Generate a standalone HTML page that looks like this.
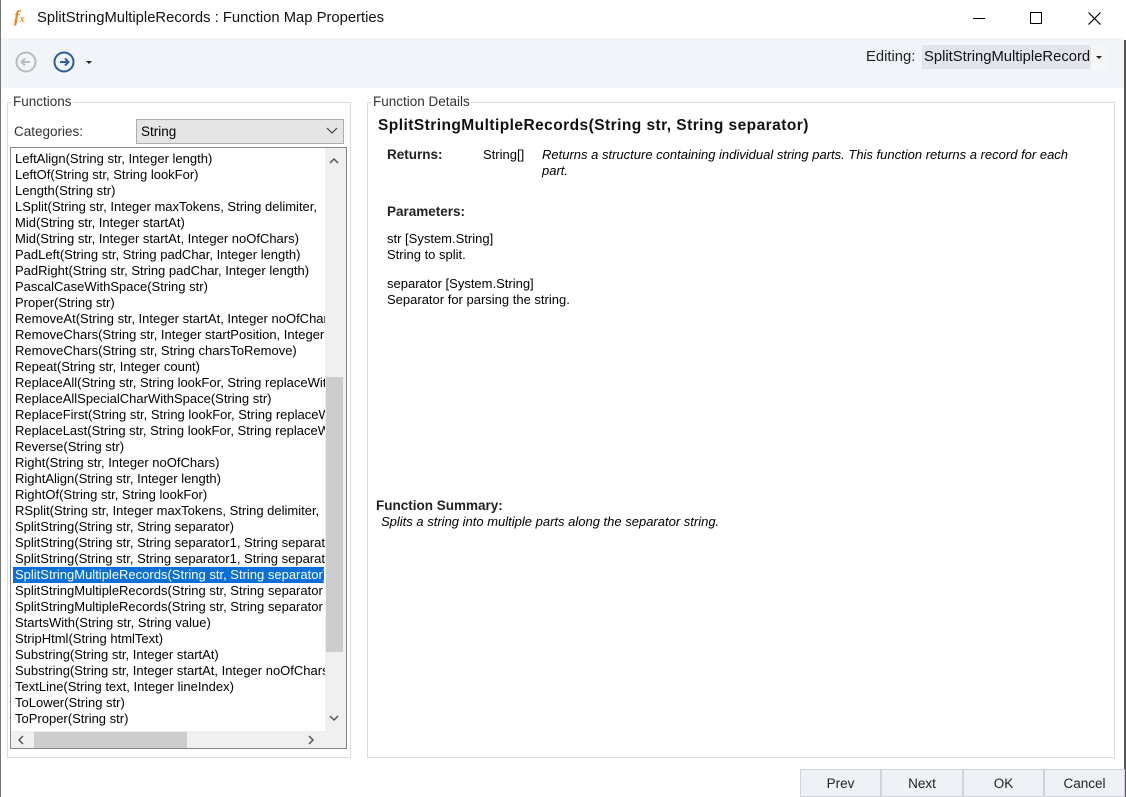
<!DOCTYPE html>
<html><head><style>
*{margin:0;padding:0;box-sizing:border-box}
body{width:1126px;height:797px;background:#fff;font-family:"Liberation Sans",sans-serif;font-size:12px;color:#000;position:relative;overflow:hidden}
.abs{position:absolute}
.gb{position:absolute;border:1px solid #dcdcdc}
.gb .lg{position:absolute;top:-9px;left:4px;background:#fff;padding:0 1px;font-size:13.5px;color:#333}
.list{position:absolute;left:10px;top:147px;width:337px;height:602px;border:1px solid #828790;background:#fff;overflow:hidden}
.it{position:absolute;left:4px;width:310px;overflow:hidden;white-space:nowrap;font-size:13px;line-height:16px;height:16px}
.sel{background:#0a6fd6;color:#fff;left:2px;padding-left:2px;width:311px}
.btn{position:absolute;top:769px;height:28px;background:#eef2f7;border:1px solid #d0d4da;text-align:center;line-height:27px;font-size:13.5px;color:#222}
.t{font-size:13px;line-height:16px}
</style></head><body>
<div class="abs" style="left:0;top:0;width:1px;height:797px;background:#777"></div>
<div class="abs" style="left:1124px;top:40px;width:2px;height:757px;background:#555"></div>
<div class="abs" style="left:14px;top:7px;font-family:'Liberation Serif',serif;font-style:italic;font-weight:bold;color:#e08a1e;font-size:17px">f<span style="font-size:10px">x</span></div>
<div class="abs" style="left:37px;top:10px;font-size:14.8px;color:#111">SplitStringMultipleRecords : Function Map Properties</div>
<div class="abs" style="left:973px;top:18px;width:12px;height:1px;background:#000"></div>
<div class="abs" style="left:1030px;top:12px;width:12px;height:12px;border:1px solid #000"></div>
<svg class="abs" style="left:1088px;top:12px" width="13" height="13"><path d="M0.5 0.5L12.5 12.5M12.5 0.5L0.5 12.5" stroke="#000" stroke-width="1.2"/></svg>
<div class="abs" style="left:1px;top:38px;width:1123px;height:50px;background:#f1f4f8"></div>
<svg class="abs" style="left:15px;top:51px" width="24" height="24"><circle cx="11" cy="11" r="9.5" fill="none" stroke="#bbb" stroke-width="2"/><path d="M15 11H7M10 7.5L6.5 11L10 14.5" fill="none" stroke="#bbb" stroke-width="2"/></svg>
<svg class="abs" style="left:53px;top:51px" width="24" height="24"><circle cx="11" cy="11" r="9.5" fill="none" stroke="#2b5d9c" stroke-width="2"/><path d="M7 11H15M12 7.5L15.5 11L12 14.5" fill="none" stroke="#2b5d9c" stroke-width="2"/></svg>
<div class="abs" style="left:86px;top:61px;border-left:3px solid transparent;border-right:3px solid transparent;border-top:3px solid #222"></div>
<div class="abs" style="left:866px;top:49px;font-size:14.8px;color:#222">Editing:</div>
<div class="abs" style="left:922px;top:45px;width:169px;height:24px;background:#e1e6ee"></div>
<div class="abs" style="left:1091px;top:45px;width:16px;height:24px;background:#f7f7f7"></div>
<div class="abs" style="left:1096px;top:56px;border-left:3px solid transparent;border-right:3px solid transparent;border-top:3px solid #222"></div>
<div class="abs" style="left:924px;top:49px;font-size:14.8px;color:#111;width:166px;overflow:hidden;white-space:nowrap">SplitStringMultipleRecords</div>
<div class="gb" style="left:7px;top:102px;width:344px;height:656px"><span class="lg">Functions</span></div>
<div class="abs" style="left:14px;top:124px;font-size:13.5px;color:#333">Categories:</div>
<div class="abs" style="left:136px;top:119px;width:208px;height:25px;background:#e5e5e5;border:1px solid #adadad"></div>
<div class="abs" style="left:141px;top:124px;font-size:13.5px">String</div>
<svg class="abs" style="left:326px;top:127px" width="12" height="8"><path d="M1 1L6 6L11 1" fill="none" stroke="#444" stroke-width="1.2"/></svg>
<div class="list">
<div class="it" style="top:3px">LeftAlign(String str, Integer length)</div>
<div class="it" style="top:19px">LeftOf(String str, String lookFor)</div>
<div class="it" style="top:35px">Length(String str)</div>
<div class="it" style="top:51px">LSplit(String str, Integer maxTokens, String delimiter, </div>
<div class="it" style="top:67px">Mid(String str, Integer startAt)</div>
<div class="it" style="top:83px">Mid(String str, Integer startAt, Integer noOfChars)</div>
<div class="it" style="top:99px">PadLeft(String str, String padChar, Integer length)</div>
<div class="it" style="top:115px">PadRight(String str, String padChar, Integer length)</div>
<div class="it" style="top:131px">PascalCaseWithSpace(String str)</div>
<div class="it" style="top:147px">Proper(String str)</div>
<div class="it" style="top:163px">RemoveAt(String str, Integer startAt, Integer noOfChars)</div>
<div class="it" style="top:179px">RemoveChars(String str, Integer startPosition, Integer</div>
<div class="it" style="top:195px">RemoveChars(String str, String charsToRemove)</div>
<div class="it" style="top:211px">Repeat(String str, Integer count)</div>
<div class="it" style="top:227px">ReplaceAll(String str, String lookFor, String replaceWith)</div>
<div class="it" style="top:243px">ReplaceAllSpecialCharWithSpace(String str)</div>
<div class="it" style="top:259px">ReplaceFirst(String str, String lookFor, String replaceWith)</div>
<div class="it" style="top:275px">ReplaceLast(String str, String lookFor, String replaceWith)</div>
<div class="it" style="top:291px">Reverse(String str)</div>
<div class="it" style="top:307px">Right(String str, Integer noOfChars)</div>
<div class="it" style="top:323px">RightAlign(String str, Integer length)</div>
<div class="it" style="top:339px">RightOf(String str, String lookFor)</div>
<div class="it" style="top:355px">RSplit(String str, Integer maxTokens, String delimiter, </div>
<div class="it" style="top:371px">SplitString(String str, String separator)</div>
<div class="it" style="top:387px">SplitString(String str, String separator1, String separator2)</div>
<div class="it" style="top:403px">SplitString(String str, String separator1, String separator2)</div>
<div class="it sel" style="top:419px">SplitStringMultipleRecords(String str, String separator)</div>
<div class="it" style="top:435px">SplitStringMultipleRecords(String str, String separator</div>
<div class="it" style="top:451px">SplitStringMultipleRecords(String str, String separator</div>
<div class="it" style="top:467px">StartsWith(String str, String value)</div>
<div class="it" style="top:483px">StripHtml(String htmlText)</div>
<div class="it" style="top:499px">Substring(String str, Integer startAt)</div>
<div class="it" style="top:515px">Substring(String str, Integer startAt, Integer noOfChars)</div>
<div class="it" style="top:531px">TextLine(String text, Integer lineIndex)</div>
<div class="it" style="top:547px">ToLower(String str)</div>
<div class="it" style="top:563px">ToProper(String str)</div>
<div class="abs" style="left:314px;top:0;width:22px;height:583px;background:#f0f0f0"></div>
<div class="abs" style="left:315px;top:229px;width:17px;height:275px;background:#cdcdcd"></div>
<svg class="abs" style="left:318px;top:9px" width="10" height="7"><path d="M1 6L5 2L9 6" fill="none" stroke="#555" stroke-width="1.5"/></svg>
<svg class="abs" style="left:318px;top:567px" width="10" height="7"><path d="M1 1L5 5L9 1" fill="none" stroke="#555" stroke-width="1.5"/></svg>
<div class="abs" style="left:0;top:583px;width:336px;height:18px;background:#f0f0f0"></div>
<div class="abs" style="left:23px;top:584px;width:153px;height:17px;background:#cdcdcd"></div>
<svg class="abs" style="left:6px;top:587px" width="7" height="10"><path d="M6 1L2 5L6 9" fill="none" stroke="#555" stroke-width="1.5"/></svg>
<svg class="abs" style="left:297px;top:587px" width="7" height="10"><path d="M1 1L5 5L1 9" fill="none" stroke="#555" stroke-width="1.5"/></svg>
</div>
<div class="gb" style="left:367px;top:102px;width:748px;height:656px"><span class="lg">Function Details</span></div>
<div class="abs" style="left:378px;top:117px;font-size:15.5px;letter-spacing:0.45px;font-weight:bold;color:#111">SplitStringMultipleRecords(String str, String separator)</div>
<div class="abs" style="left:387px;top:147px;font-size:13.5px;font-weight:bold;color:#222">Returns:</div>
<div class="abs t" style="left:483px;top:147px">String[]</div>
<div class="abs t" style="left:542px;top:147px;width:545px;font-style:italic">Returns a structure containing individual string parts. This function returns a record for each part.</div>
<div class="abs" style="left:387px;top:204px;font-size:13.5px;font-weight:bold;color:#222">Parameters:</div>
<div class="abs t" style="left:387px;top:231px">str [System.String]<br>String to split.</div>
<div class="abs t" style="left:387px;top:276px">separator [System.String]<br>Separator for parsing the string.</div>
<div class="abs" style="left:376px;top:498px;font-size:13.5px;font-weight:bold;color:#222">Function Summary:</div>
<div class="abs t" style="left:381px;top:514px;font-style:italic">Splits a string into multiple parts along the separator string.</div>
<div class="btn" style="left:800px;width:81px">Prev</div>
<div class="btn" style="left:881px;width:82px">Next</div>
<div class="btn" style="left:963px;width:81px">OK</div>
<div class="btn" style="left:1044px;width:81px">Cancel</div>
</body></html>
